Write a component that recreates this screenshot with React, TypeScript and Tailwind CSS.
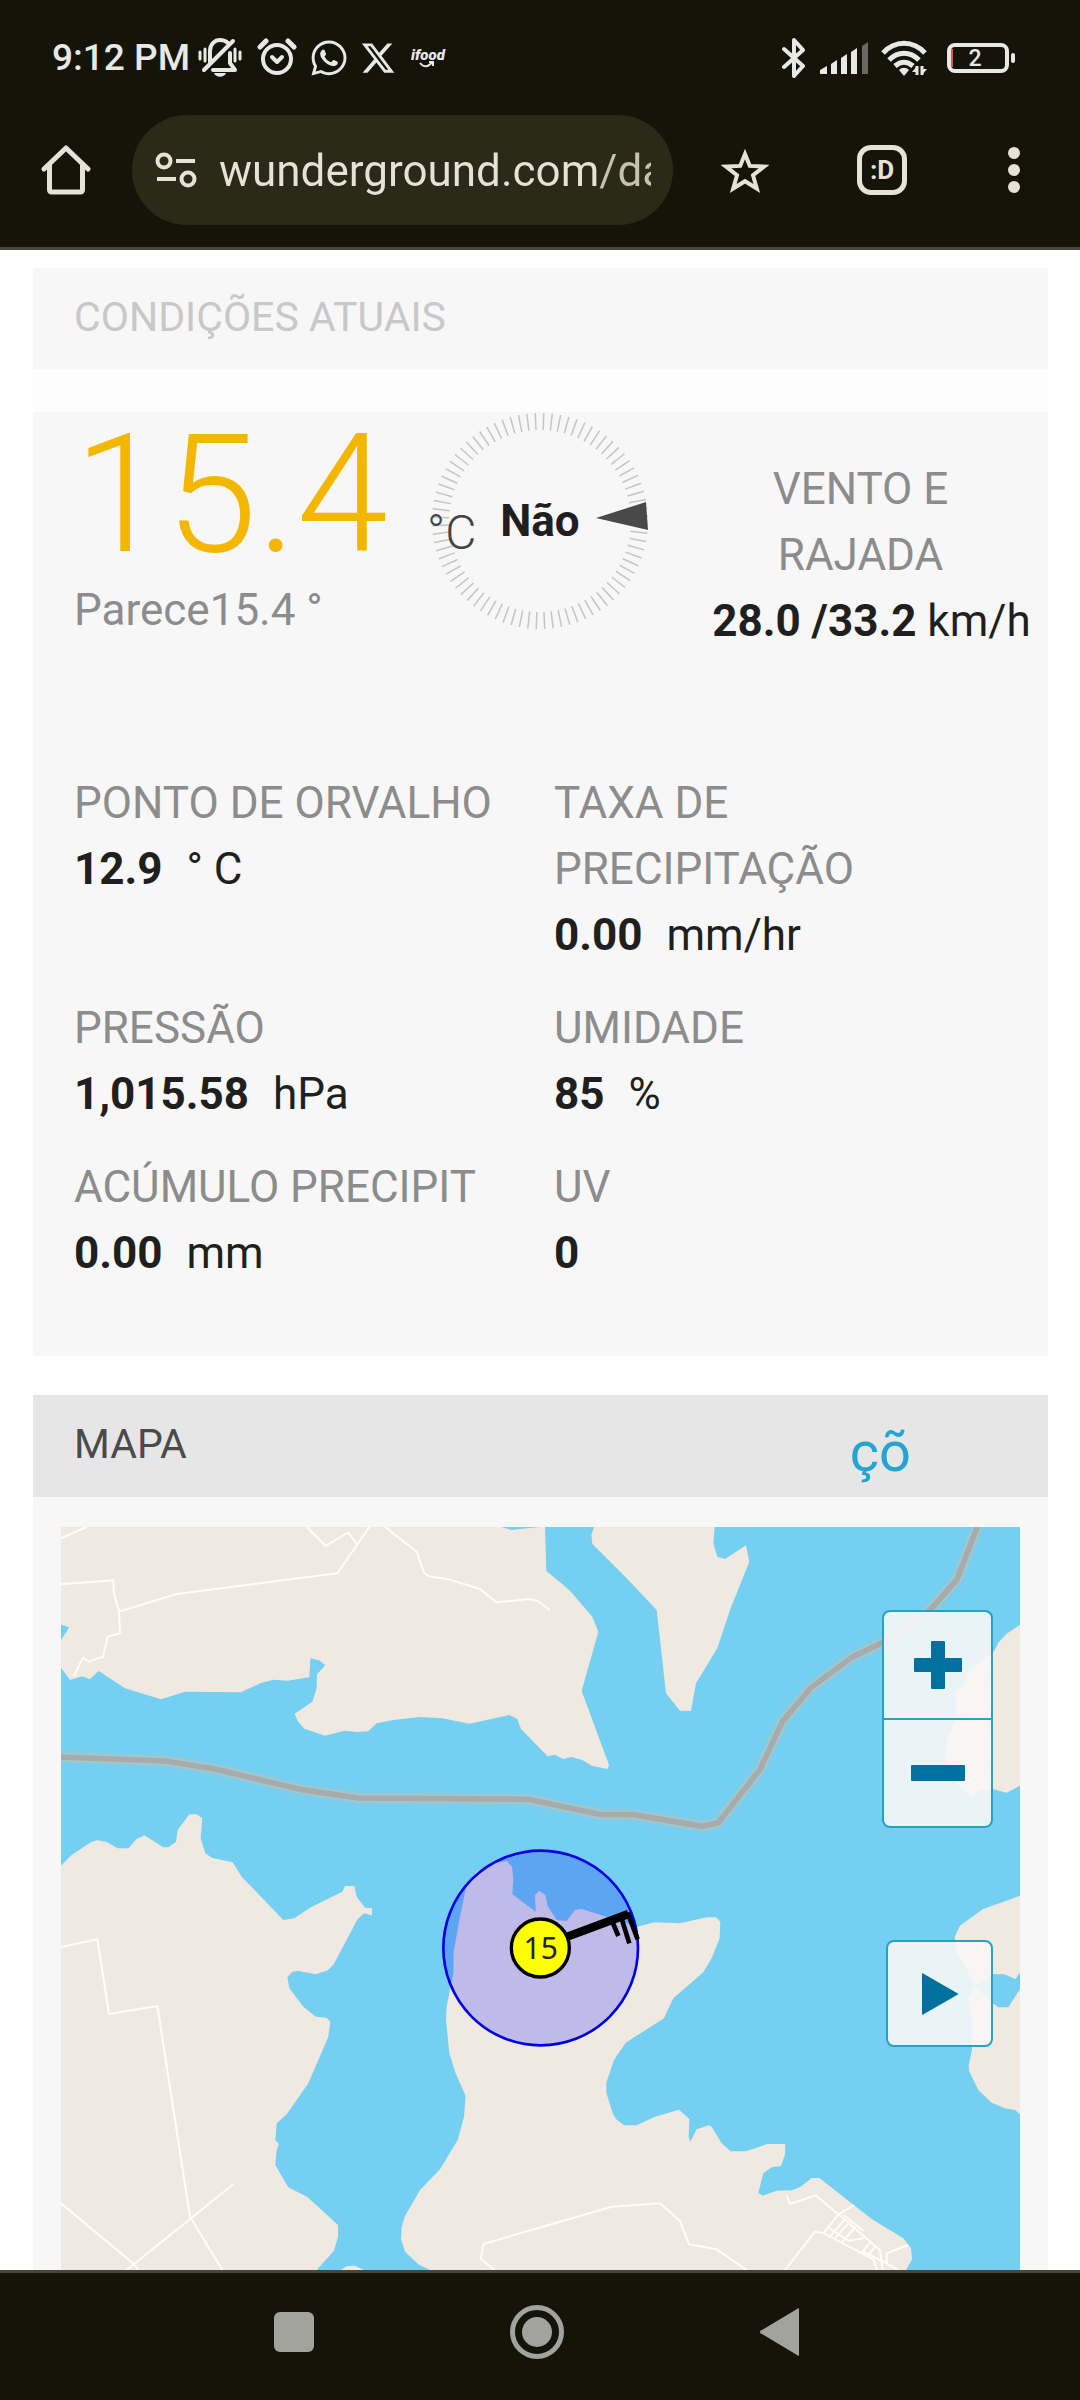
import React from 'react';
import { FaWhatsapp, FaXTwitter } from 'react-icons/fa6';

const readings = [
  { label: 'PONTO DE ORVALHO', value: '12.9', unit: '° C' },
  { label: 'TAXA DE PRECIPITAÇÃO', value: '0.00', unit: 'mm/hr' },
  { label: 'PRESSÃO', value: '1,015.58', unit: 'hPa' },
  { label: 'UMIDADE', value: '85', unit: '%' },
  { label: 'ACÚMULO PRECIPIT', value: '0.00', unit: 'mm' },
  { label: 'UV', value: '0', unit: '' },
];

const land = [
  // north shore
  '3,21 1455,21 1459,153 1500,187 1530,212 1597,290 1615,335 1565,513 1647,735 1643,747 1597,738 1567,720 1535,711 1510,717 1484,704 1463,709 1383,627 1372,597 1348,585 1229,611 1146,595 1080,591 1000,600 950,610 925,634 890,636 853,632 795,647 733,626 713,603 704,581 757,545 770,505 771,463 796,436 777,421 751,415 748,472 683,482 640,479 603,489 543,517 375,515 303,538 195,505 116,453 90,478 66,469 30,480 3,443',
  '1602,21 1594,45 1597,72 1700,175 1790,270 1818,520 1860,572 1893,573 1908,490 1972,385 2010,270 2068,125 2058,76 1995,117 1972,110 1960,70 1964,21',
  // east shore
  '2880,314 2838,343 2815,368 2803,392 2757,430 2720,460 2710,495 2686,515 2690,590 2660,660 2657,720 2690,790 2735,830 2760,810 2800,808 2840,818 2880,797',
  '2880,1127 2768,1168 2700,1217 2684,1250 2692,1300 2725,1355 2742,1397 2725,1440 2738,1520 2736,1590 2726,1635 2728,1655 2755,1710 2795,1748 2835,1765 2865,1770 2880,1783',
  // west shore
  '3,1037 35,1005 95,965 113,961 140,966 173,985 205,985 230,957 253,946 310,982 325,982 348,965 353,930 388,883 410,883 427,895 422,955 436,1000 455,1013 518,1027 545,1070 670,1200 703,1195 750,1163 847,1115 855,1098 883,1098 890,1130 915,1163 936,1165 936,1186 912,1180 893,1197 820,1335 803,1351 768,1363 715,1353 697,1355 682,1372 688,1405 730,1460 768,1490 800,1493 811,1505 805,1550 745,1690 680,1783 650,1810 646,1860 657,1872 650,1890 646,1935 685,2002 743,2032 834,2115 834,2150 822,2192 770,2250 3,2250',
  '842,2250 860,2239 885,2237 912,2250',
  // station peninsula
  '1340,1023 1356,1040 1360,1078 1357,1123 1427,1175 1425,1125 1437,1112 1456,1125 1463,1158 1490,1200 1520,1203 1545,1170 1565,1167 1640,1190 1732,1220 1783,1207 1860,1210 1940,1192 1968,1192 1981,1205 1979,1255 1955,1315 1930,1357 1840,1435 1812,1495 1697,1568 1662,1620 1639,1688 1639,1718 1658,1780 1668,1797 1692,1816 1730,1816 1785,1790 1857,1769 1888,1797 1886,1850 1891,1865 1910,1828 1947,1816 1955,1820 1985,1870 2012,1894 2058,1894 2122,1872 2176,1872 2175,1903 2163,1938 2135,1942 2110,1960 2095,2018 2108,2027 2150,2012 2197,2011 2222,2000 2255,1974 2278,1974 2435,2097 2530,2155 2553,2185 2556,2218 2538,2250 1110,2250 1075,2233 1035,2195 1023,2157 1025,2120 1035,2088 1080,2010 1140,1948 1193,1860 1212,1790 1217,1728 1185,1655 1168,1600 1158,1500 1160,1460 1180,1360 1181,1295 1200,1190 1218,1102 1250,1055 1300,1030',
];

const water = [
  '3,314 28,322 3,360',
  '1323,21 1355,30 1440,21',
  '2742,1397 2798,1363 2833,1363 2866,1377 2880,1358 2880,1407 2845,1462 2815,1462 2798,1450',
];

const roads = [
  '3,193 160,181 162,220 177,272 180,340 143,350 129,410 87,425 69,413 42,468',
  '177,275 350,222 832,160 928,21',
  '740,21 797,78 865,37 890,72',
  '975,21 1070,95 1092,158 1105,168 1167,178 1260,207 1310,247 1407,237 1433,243 1470,270',
  '3,55 80,21',
  '3,1281 112,1258 147,1482 292,1458 390,2090 487,2250',
  '520,1993 200,2250',
  '3,2050 222,2232 235,2250',
  '1305,2250 1262,2217 1270,2172 1500,2105 1655,2060 1800,2050 1860,2103 1887,2173 1970,2188 2060,2250',
  '2180,2027 2190,2052 2267,2026 2335,2083 2460,2190 2468,2250',
  '2175,2250 2265,2135 2292,2140 2440,2218 2452,2250',
  '2383,2055 2335,2083 2290,2140',
  '2350,2085 2410,2132',
  '2545,2175 2480,2200 2480,2230 2515,2250',
  '2480,2230 2405,2193',
  '2355,2097 2310,2150',
  '2370,2105 2322,2158',
  '2388,2118 2348,2165',
  '2308,2125 2365,2162 2410,2155',
  '2430,2168 2405,2198',
  '2445,2180 2425,2205',
];

const highway =
  '3,711 315,723 465,747 720,808 895,834 1405,838 1500,858 1620,883 1720,884 1927,919 1975,908 2100,748 2167,605 2253,503 2375,412 2505,350 2610,270 2690,180 2752,21';

const StatusBar: React.FC = () => (
  <div className="flex h-[115px] items-center justify-between pl-[52px] pr-[65px] text-[#e8e8e6]">
    <div className="flex items-center">
      <span className="text-[37px] font-medium">9:12 PM</span>
      <svg className="ml-2 h-10 w-11" viewBox="0 0 44 40" fill="none" stroke="currentColor" strokeWidth="4" strokeLinecap="round">
        <path d="M12 24V13c0-7 5-11 10-11 4 0 6 1 8 3M15 32h22l-5-7V15" strokeLinejoin="round" />
        <path d="M6 32 35 3" />
        <path d="M2 14v7M7 11v12M37 11v12M42 14v7" strokeWidth="3" />
        <path d="M16 35h12c-2 5-10 5-12 0Z" fill="currentColor" stroke="none" />
      </svg>
      <svg className="ml-[15px] h-10 w-10" viewBox="0 0 40 40" fill="none" stroke="currentColor" strokeWidth="4" strokeLinecap="round">
        <circle cx="20" cy="21" r="14" />
        <path d="m3 9 6-6M37 9l-6-6" strokeWidth="5" />
        <path d="m15 19 5 5 5-5" strokeLinejoin="round" />
      </svg>
      <FaWhatsapp className="ml-3 size-10" />
      <FaXTwitter className="ml-[11px] size-9" />
      <svg className="ml-[15px] h-6 w-9" viewBox="0 0 36 24" fill="none" stroke="currentColor">
        <text x="0" y="14" fontSize="15" fontWeight="900" fontStyle="italic" fill="currentColor" stroke="none">ifood</text>
        <path d="M9 17c4 5 9 4 12-1M18 16h4v4" strokeWidth="2" />
      </svg>
    </div>
    <div className="flex items-center">
      <svg className="h-10 w-6" viewBox="0 0 24 40" fill="none" stroke="currentColor" strokeWidth="4" strokeLinecap="round" strokeLinejoin="round">
        <path d="m2 11 19 17-9 10V2l9 10L2 29" />
      </svg>
      <svg className="ml-[14px] h-8 w-12" viewBox="0 0 48 32" fill="currentColor">
        <path d="M0 32v-4l7-4v8ZM11 32V22l6-4v14ZM21 32V16l6-4v20ZM31 32V10l6-4v26Z" />
        <path d="M42 32V4l6-4v32Z" opacity=".4" />
      </svg>
      <svg className="ml-[13px] h-9 w-[46px]" viewBox="0 0 46 36" fill="none" stroke="currentColor" strokeWidth="5">
        <path d="M2 13c12-13 30-13 42 0M8 20c9-9 21-9 30 0M14 26c6-5 12-5 18 0" />
        <path d="M18 30c3-3 7-3 10 0l-5 6Z" fill="currentColor" stroke="none" />
        <path d="M36 26v9M41 26v9" strokeWidth="3" />
        <path d="m31 32 5 0v-6ZM46 29h-5v6Z" fill="currentColor" stroke="none" />
      </svg>
      <svg className="ml-5 h-8 w-[68px]" viewBox="0 0 68 32" fill="none">
        <path d="M4 7v18" stroke="#d8564c" strokeWidth="4" />
        <rect x="2" y="3" width="58" height="26" rx="6" stroke="currentColor" strokeWidth="4" />
        <rect x="64" y="11" width="4" height="10" rx="2" fill="currentColor" />
        <text x="28" y="24" fontSize="23" fontWeight="500" textAnchor="middle" fill="currentColor">2</text>
      </svg>
    </div>
  </div>
);

const Toolbar: React.FC = () => (
  <div className="flex items-center pb-[22px] pl-[41px] pr-[60px] text-[#e6e2d6]">
    <button aria-label="Página inicial">
      <svg className="size-[50px]" viewBox="0 0 50 50" fill="none" stroke="currentColor" strokeWidth="5" strokeLinecap="round" strokeLinejoin="round">
        <path d="M3 24 25 3l22 21M8.500 20v25a2 2 0 0 0 2 2h29a2 2 0 0 0 2-2V20" />
      </svg>
    </button>
    <div className="ml-[41px] flex h-[110px] min-w-0 flex-1 items-center rounded-full bg-[#2b2917] pl-[23px] pr-[22px]">
      <svg className="h-9 w-[42px] shrink-0" viewBox="0 0 42 36" fill="none" stroke="currentColor" strokeWidth="4">
        <circle cx="9" cy="9" r="6.500" />
        <circle cx="33" cy="27" r="6.500" />
        <path d="M21 9h19M2 27h19" />
      </svg>
      <input
        type="text"
        readOnly
        aria-label="Endereço"
        defaultValue="wunderground.com/dashboard"
        className="ml-[22px] w-full min-w-0 flex-1 bg-[linear-gradient(to_right,#e6e2d6_380px,#c5c2ae_380px)] bg-clip-text pt-[2px] text-[44px] text-transparent outline-none"
      />
    </div>
    <button aria-label="Favoritar" className="ml-12">
      <svg className="size-12" viewBox="0 0 48 48" fill="none" stroke="currentColor" strokeWidth="4">
        <path d="m24 8 4.800 11.900L43 20.600l-11 8.600 3.800 13.300L24 35.200l-11.800 7.300L16 29.200 5 20.600l14.200-.7Z" />
      </svg>
    </button>
    <button aria-label="Abas" className="ml-[88px] flex size-[50px] items-center justify-center rounded-[14px] border-[5px] border-current text-[26px] font-bold">
      :D
    </button>
    <button aria-label="Mais opções" className="ml-[101px]">
      <svg className="h-12 w-3" viewBox="0 0 12 48" fill="currentColor">
        <circle cx="6" cy="7" r="6" />
        <circle cx="6" cy="24" r="6" />
        <circle cx="6" cy="41" r="6" />
      </svg>
    </button>
  </div>
);

const WindDial: React.FC = () => (
  <div className="relative size-[218px] shrink-0">
    <svg className="size-full" viewBox="0 0 218 218">
      {Array.from({ length: 80 }, (_, i) => (
        <line key={i} x1="109" y1="1" x2="109" y2="18" stroke="#c4c4c4" strokeWidth="1.500" transform={`rotate(${i * 4.5 + 2} 109 109)`} />
      ))}
      <path d="m165 106 50-16 2 28Z" fill="#494949" />
    </svg>
    <span className="absolute inset-0 flex items-center justify-center text-[44px] font-bold">Não</span>
    <span className="absolute -left-1 top-[88px] text-[48px] leading-[66px] font-light text-[#444]">°C</span>
  </div>
);

const StationMap: React.FC = () => (
  <div className="relative">
    <svg className="block h-auto w-full bg-[#75cff0]" viewBox="3 21 2877 2229" strokeLinejoin="round">
      {land.map((points) => (
        <polygon key={points} points={points} fill="#efe9e1" />
      ))}
      {water.map((points) => (
        <polygon key={points} points={points} fill="#75cff0" />
      ))}
      <g fill="none" stroke="#fffdf8" strokeWidth="6">
        {roads.map((points) => (
          <polyline key={points} points={points} />
        ))}
      </g>
      <g fill="none">
        <polyline points={highway} stroke="#b5c4c0" strokeOpacity=".35" strokeWidth="36" />
        <polyline points={highway} stroke="#b5c4c0" strokeOpacity=".6" strokeWidth="26" />
        <polyline points={highway} stroke="#a8abac" strokeWidth="17" />
      </g>
      <circle cx="1442" cy="1284" r="292" fill="#0000ff" fillOpacity=".2" stroke="#0000e0" strokeWidth="8" />
      <g stroke="#000">
        <path d="m1500 1258 205-76" strokeWidth="25" />
        <path d="m1655 1200 20 48M1683 1190l25 80M1703 1178l30 80" strokeWidth="14" />
      </g>
      <circle cx="1441" cy="1284" r="87" fill="#ffff00" stroke="#000" strokeWidth="10" />
      <text x="1442" y="1318" textAnchor="middle" fontSize="90" fill="#222" className="font-['Noto_Sans']">15</text>
    </svg>
    <div className="absolute right-[27px] top-[83px] flex flex-col items-end gap-28 text-[#00709e]">
      <div className="flex w-[111px] flex-col divide-y-2 divide-[#28a1c9] overflow-hidden rounded-lg border-2 border-[#28a1c9] bg-[#f7f7f7]/90">
        <button aria-label="Aumentar zoom" className="flex h-[108px] items-center justify-center">
          <svg className="size-12" viewBox="0 0 48 48" fill="currentColor">
            <rect x="17" width="14" height="48" rx="1" />
            <rect y="17" width="48" height="14" rx="1" />
          </svg>
        </button>
        <button aria-label="Diminuir zoom" className="flex h-[106px] items-center justify-center">
          <svg className="h-4 w-[54px]" viewBox="0 0 54 16" fill="currentColor">
            <rect width="54" height="16" rx="1" />
          </svg>
        </button>
      </div>
      <button aria-label="Reproduzir" className="flex size-[107px] items-center justify-center rounded-lg border-2 border-[#28a1c9] bg-[#f7f7f7]/90">
        <svg className="h-[42px] w-9" viewBox="0 0 36 42" fill="currentColor">
          <path d="M0 2a1 1 0 0 1 2-1l33 19a1 1 0 0 1 0 2L2 41a1 1 0 0 1-2-1Z" />
        </svg>
      </button>
    </div>
  </div>
);

const App: React.FC = () => {
  return (
    <div className="bg-white font-['Roboto',sans-serif] text-[#1f1f1f]">
      <header className="border-b-[3px] border-[#47473a] bg-[#141409]">
        <StatusBar />
        <Toolbar />
      </header>

      <main className="px-8 pl-[33px] pt-[18px]">
        <section className="bg-[#fdfdfd]">
          <h2 className="bg-[#f7f7f7] pb-[19px] pl-[41px] pt-4 text-[41px] leading-[66px] text-[#c8c8c8]">CONDIÇÕES ATUAIS</h2>

          <div className="mt-[43px] bg-[#f7f7f7] pb-[70px]">
            <div className="flex pl-[41px]">
              <div className="w-[357px] shrink-0">
                <p className="text-[165px] leading-[165px] font-light text-[#f3b700]">15.4</p>
                <p className="text-[44px] leading-[66px] text-[#8c8c8c]">Parece15.4 °</p>
              </div>
              <WindDial />
              <div className="flex-1 pl-6 pt-11 text-center text-[44px] leading-[66px]">
                <p className="px-12 text-[#8c8c8c]">VENTO E RAJADA</p>
                <p className="whitespace-nowrap">
                  &nbsp;&nbsp;<b>28.0 /33.2</b> km/h
                </p>
              </div>
            </div>

            <dl className="mt-[116px] grid grid-cols-2 gap-y-[27px] pl-[41px] pr-[14px] text-[44px] leading-[66px]">
              {readings.map((item) => (
                <div key={item.label} className="pr-12">
                  <dt className="text-[#8c8c8c]">{item.label}</dt>
                  <dd>
                    <b>{item.value}</b>
                    <span className="ml-6">{item.unit}</span>
                  </dd>
                </div>
              ))}
            </dl>
          </div>
        </section>

        <section className="mt-[39px] bg-[#f7f7f7]">
          <div className="flex h-[102px] justify-between bg-[#e6e6e6] pl-[41px] pr-[137px] leading-[66px]">
            <h2 className="pt-4 text-[41px] text-[#4a4a4a]">MAPA</h2>
            <a href="#mapa" className="pt-6 text-[56px] text-[#22a5d2]">çõ</a>
          </div>
          <div className="px-7 pt-[30px]">
            <StationMap />
          </div>
        </section>
      </main>

      <nav className="flex items-center justify-center gap-[189px] border-t-[3px] border-[#47473a] bg-[#141409] pb-[41px] pr-[7px] pt-8 text-[#a3a39e]">
        <button aria-label="Recentes">
          <svg className="size-[54px]" viewBox="0 0 54 54" fill="currentColor">
            <rect x="7" y="7" width="40" height="40" rx="6" />
          </svg>
        </button>
        <button aria-label="Início">
          <svg className="size-[54px]" viewBox="0 0 54 54" fill="currentColor">
            <circle cx="27" cy="27" r="24.500" fill="none" stroke="currentColor" strokeWidth="5" />
            <circle cx="27" cy="27" r="15" />
          </svg>
        </button>
        <button aria-label="Voltar">
          <svg className="size-[54px]" viewBox="0 0 54 54" fill="currentColor">
            <path d="M9 25a2 2 0 0 0 0 4l35 21a1 1 0 0 0 2-1V5a1 1 0 0 0-2-1Z" />
          </svg>
        </button>
      </nav>
    </div>
  );
};

export default App;
